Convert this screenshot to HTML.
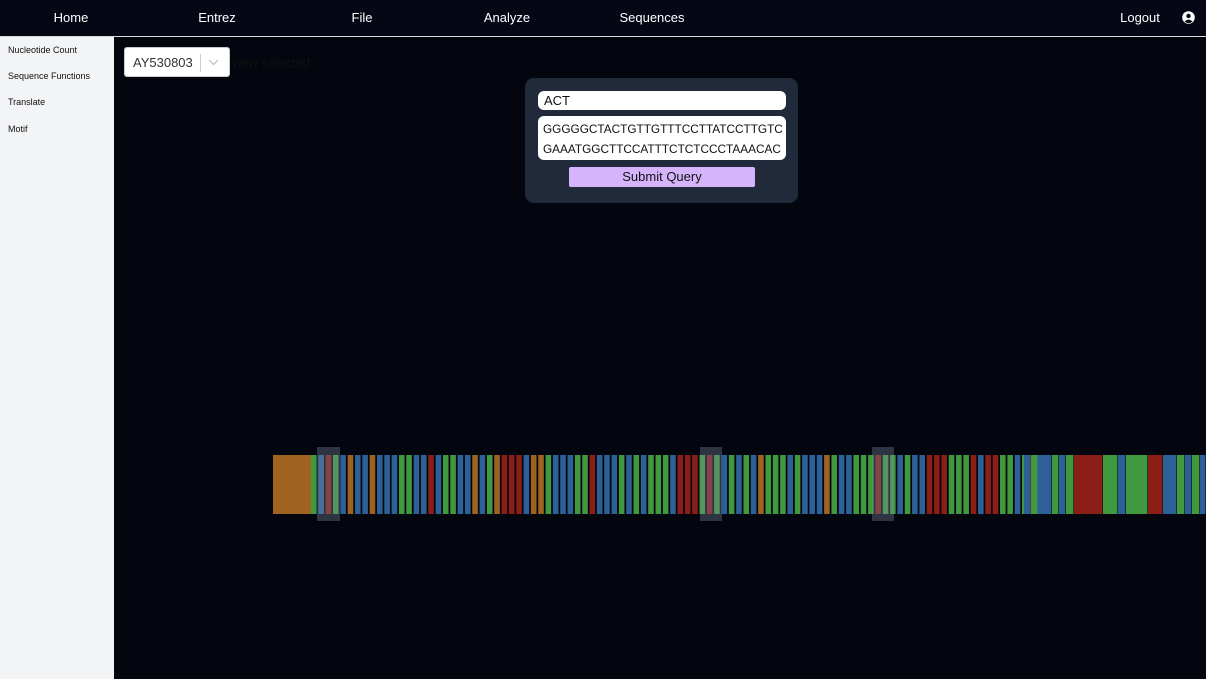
<!DOCTYPE html>
<html><head><meta charset="utf-8">
<style>
*{margin:0;padding:0;box-sizing:border-box}
html,body{width:1206px;height:679px;overflow:hidden;background:#03060f;font-family:"Liberation Sans","DejaVu Sans",sans-serif}
#hdr{position:absolute;left:0;top:0;width:1206px;background:#050814;border-bottom:1px solid #d8d8d8;height:37px}
#hdr span{position:absolute;top:10px;color:#fff;font-size:13px;transform:translateX(-50%)}
#side{position:absolute;left:0;top:37px;width:114px;height:642px;background:#f3f4f6}
#side div{position:absolute;left:8px;font-size:9px;color:#111}
#sel{position:absolute;left:124px;top:47px;width:106px;height:30px;background:#fff;border-radius:3px;border:1px solid #ccc}
#sel .t{position:absolute;left:8px;top:7px;font-size:13px;color:#333}
#sel .d{position:absolute;left:75px;top:6px;width:1px;height:18px;background:#ccc}
#vs{position:absolute;left:232px;top:55px;font-size:13px;color:#111}
#panel{position:absolute;left:525px;top:78px;width:273px;height:125px;background:#202a3b;border-radius:9px}
#in1{position:absolute;left:13px;top:13px;width:248px;height:19px;background:#fff;border-radius:6px;font-size:13px;padding:2px 6px;color:#111}
#ta{position:absolute;left:13px;top:38px;width:248px;height:44px;background:#fff;border-radius:6px;font-size:11.8px;padding:3px 5px;color:#111;line-height:20px;overflow:hidden;white-space:nowrap}
#btn{position:absolute;left:44px;top:89px;width:186px;height:20px;background:#d6b4fc;border-radius:2px;font-size:13px;text-align:center;line-height:20px;color:#111}
</style></head><body>
<div id="hdr">
<span style="left:71px">Home</span><span style="left:217px">Entrez</span><span style="left:362px">File</span><span style="left:507px">Analyze</span><span style="left:652px">Sequences</span><span style="left:1140px">Logout</span>
<svg style="position:absolute;left:1182px;top:11px" width="13" height="13" viewBox="0 0 13 13"><circle cx="6.5" cy="6.5" r="6.3" fill="#fff"/><circle cx="6.5" cy="5" r="2.2" fill="#050814"/><path d="M2.6 10.6 Q6.5 6.6 10.4 10.6 Q6.5 13.6 2.6 10.6Z" fill="#050814"/></svg>
</div>
<div id="side"><div style="top:8px">Nucleotide Count</div><div style="top:34px">Sequence Functions</div><div style="top:60px">Translate</div><div style="top:87px">Motif</div></div>
<div id="sel"><div class="t">AY530803</div><div class="d"></div><svg style="position:absolute;left:83px;top:11px" width="11" height="7"><path d="M1 1 L5.5 5.5 L10 1" stroke="#bbb" fill="none" stroke-width="1.2"/></svg></div>
<div id="vs">view selected</div>
<div id="panel"><div id="in1">ACT</div><div id="ta">GGGGGCTACTGTTGTTTCCTTATCCTTGTC<br>GAAATGGCTTCCATTTCTCTCCCTAAACAC</div><div id="btn">Submit Query</div></div>
<svg id="bars" style="position:absolute;left:0;top:0" width="1206" height="679"></svg>
<script>
var C={O:'#a0621f',G:'#40983f',B:'#2d6096',R:'#8b1e16'};
var rects=[];
function add(x,w,c){rects.push('<rect x="'+x+'" y="455" width="'+w+'" height="59" fill="'+C[c]+'"/>');}
add(273,32,'O');add(305,6,'O');
var seq='GBRGBO'+'BBOBBBGGBBRBGGBBOBGORRRBOOGBB'+'BGGRBBBGBGBGGGBRRRGRGBGBGBOGGGBGBBBOGBBGGGRG'+'GBGBBRRRGGGRBRRGGBGRBG';
var x=311,p=7.33;
for(var i=0;i<seq.length;i++){add(x+i*p,5.6,seq[i]);}
var wide=[[1024,1031,'B'],[1031,1038,'G'],[1038,1052,'B'],[1052,1059,'G'],[1059,1066,'B'],[1066,1074,'G'],[1074,1103,'R'],[1103,1118,'G'],[1118,1126,'B'],[1126,1148,'G'],[1148,1163,'R'],[1163,1177,'B'],[1177,1185,'G'],[1185,1192,'B'],[1192,1200,'G'],[1200,1206,'B']];
wide.forEach(function(w){add(w[0],w[1]-w[0]-0.6,w[2]);});
[[317,340],[700,722],[872,894]].forEach(function(h){rects.push('<rect x="'+h[0]+'" y="447" width="'+(h[1]-h[0])+'" height="74" fill="rgba(130,140,160,0.35)"/>');});
document.getElementById('bars').innerHTML=rects.join('');
</script>
</body></html>
